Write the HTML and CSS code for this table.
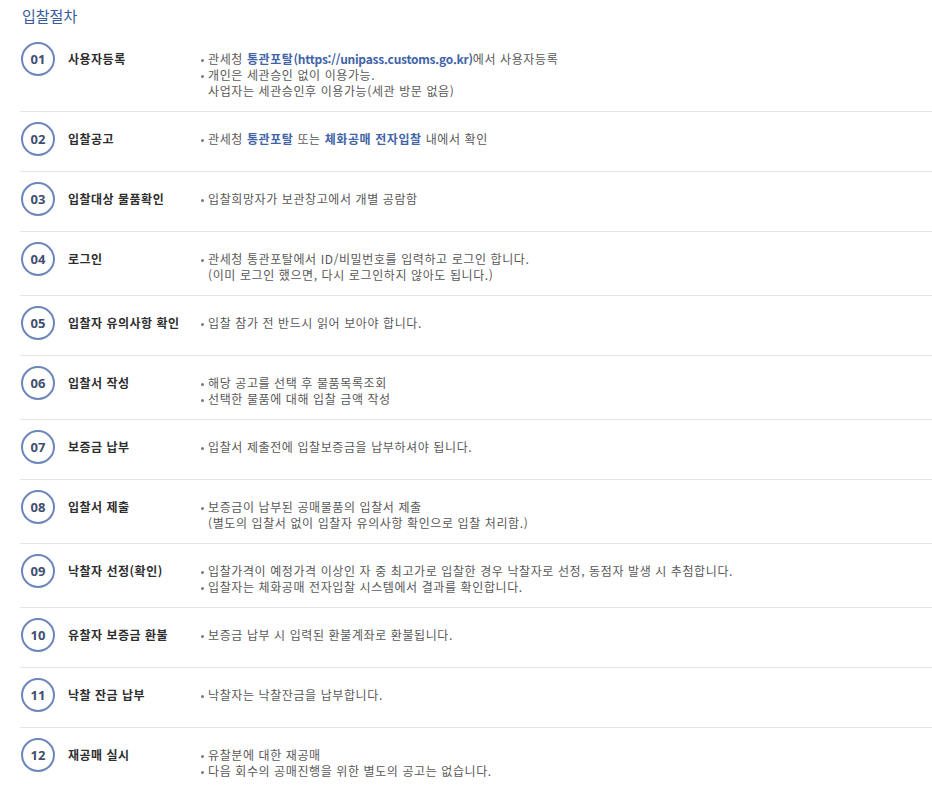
FILE: index.html
```html
<!DOCTYPE html>
<html lang="ko">
<head>
<meta charset="utf-8">
<title>입찰절차</title>
<link rel="stylesheet" href="styles.css">
</head>
<body>
<div class="wrap">
  <h2 class="page-title">입찰절차</h2>
  <ol class="steps">
    <li class="step">
      <span class="num">01</span>
      <span class="name">사용자등록</span>
      <ul class="desc">
        <li><span class="dot"></span><span>관세청 <b class="link">통관포탈<span class="url">(https://unipass.customs.go.kr)</span></b>에서 사용자등록</span></li>
        <li><span class="dot"></span><span>개인은 세관승인 없이 이용가능.<br>사업자는 세관승인후 이용가능(세관 방문 없음)</span></li>
      </ul>
    </li>
    <li class="step">
      <span class="num">02</span>
      <span class="name">입찰공고</span>
      <ul class="desc">
        <li><span class="dot"></span><span>관세청 <b class="link">통관포탈</b> 또는 <b class="link">체화공매 전자입찰</b> 내에서 확인</span></li>
      </ul>
    </li>
    <li class="step">
      <span class="num">03</span>
      <span class="name">입찰대상 물품확인</span>
      <ul class="desc">
        <li><span class="dot"></span><span>입찰희망자가 보관창고에서 개별 공람함</span></li>
      </ul>
    </li>
    <li class="step">
      <span class="num">04</span>
      <span class="name">로그인</span>
      <ul class="desc">
        <li><span class="dot"></span><span>관세청 통관포탈에서 ID/비밀번호를 입력하고 로그인 합니다.<br>(이미 로그인 했으면, 다시 로그인하지 않아도 됩니다.)</span></li>
      </ul>
    </li>
    <li class="step">
      <span class="num">05</span>
      <span class="name">입찰자 유의사항 확인</span>
      <ul class="desc">
        <li><span class="dot"></span><span>입찰 참가 전 반드시 읽어 보아야 합니다.</span></li>
      </ul>
    </li>
    <li class="step">
      <span class="num">06</span>
      <span class="name">입찰서 작성</span>
      <ul class="desc">
        <li><span class="dot"></span><span>해당 공고를 선택 후 물품목록조회</span></li>
        <li><span class="dot"></span><span>선택한 물품에 대해 입찰 금액 작성</span></li>
      </ul>
    </li>
    <li class="step">
      <span class="num">07</span>
      <span class="name">보증금 납부</span>
      <ul class="desc">
        <li><span class="dot"></span><span>입찰서 제출전에 입찰보증금을 납부하셔야 됩니다.</span></li>
      </ul>
    </li>
    <li class="step">
      <span class="num">08</span>
      <span class="name">입찰서 제출</span>
      <ul class="desc">
        <li><span class="dot"></span><span>보증금이 납부된 공매물품의 입찰서 제출<br>(별도의 입찰서 없이 입찰자 유의사항 확인으로 입찰 처리함.)</span></li>
      </ul>
    </li>
    <li class="step">
      <span class="num">09</span>
      <span class="name">낙찰자 선정(확인)</span>
      <ul class="desc">
        <li><span class="dot"></span><span>입찰가격이 예정가격 이상인 자 중 최고가로 입찰한 경우 낙찰자로 선정, 동점자 발생 시 추첨합니다.</span></li>
        <li><span class="dot"></span><span>입찰자는 체화공매 전자입찰 시스템에서 결과를 확인합니다.</span></li>
      </ul>
    </li>
    <li class="step">
      <span class="num">10</span>
      <span class="name">유찰자 보증금 환불</span>
      <ul class="desc">
        <li><span class="dot"></span><span>보증금 납부 시 입력된 환불계좌로 환불됩니다.</span></li>
      </ul>
    </li>
    <li class="step">
      <span class="num">11</span>
      <span class="name">낙찰 잔금 납부</span>
      <ul class="desc">
        <li><span class="dot"></span><span>낙찰자는 낙찰잔금을 납부합니다.</span></li>
      </ul>
    </li>
    <li class="step">
      <span class="num">12</span>
      <span class="name">재공매 실시</span>
      <ul class="desc">
        <li><span class="dot"></span><span>유찰분에 대한 재공매</span></li>
        <li><span class="dot"></span><span>다음 회수의 공매진행을 위한 별도의 공고는 없습니다.</span></li>
      </ul>
    </li>
  </ol>
</div>
</body>
</html>
```

FILE: styles.css
```css
* { box-sizing: border-box; }
html, body {
  margin: 0;
  padding: 0;
  background: #ffffff;
}
body {
  font-family: "Noto Sans CJK KR", "Noto Sans", sans-serif;
  color: #555555;
  font-size: 12px;
}
.wrap {
  padding: 6px 0 0 20px;
}
.page-title {
  margin: 0 0 6px 2px;
  font-size: 15px;
  line-height: 20px;
  font-weight: 400;
  color: #3a5c9a;
}
.steps {
  list-style: none;
  margin: 0;
  padding: 0;
}
.step {
  display: grid;
  grid-template-columns: 34px 120px 1fr;
  column-gap: 13px;
  align-items: start;
  padding: 10px 0 12px 1px;
  border-bottom: 1px solid #e6e6e6;
}
.step:last-child {
  border-bottom: none;
}
.num {
  width: 34px;
  height: 34px;
  margin-bottom: 3px;
  border: 2px solid #6c86bd;
  border-radius: 50%;
  display: flex;
  align-items: center;
  justify-content: center;
  font-size: 13px;
  font-weight: 700;
  color: #3f4f70;
  font-family: "Noto Sans", "Noto Sans CJK KR", sans-serif;
}
.name {
  margin-top: 9px;
  line-height: 16px;
  font-size: 12px;
  font-weight: 700;
  letter-spacing: 0.5px;
  color: #2e2e2e;
}
.desc {
  list-style: none;
  margin: 9px 0 0;
  padding: 0;
  line-height: 16px;
  letter-spacing: 0.6px;
  color: #585858;
}
.desc li {
  display: flex;
  align-items: flex-start;
}
.dot {
  flex: 0 0 7px;
  height: 16px;
  display: flex;
  align-items: center;
  letter-spacing: 0;
}
.dot::before {
  content: "";
  display: block;
  width: 3px;
  height: 3px;
  margin-top: 2px;
  border-radius: 50%;
  background: #777777;
}
.link {
  font-weight: 700;
  color: #3f64a8;
}
.url {
  letter-spacing: -0.25px;
}
```
